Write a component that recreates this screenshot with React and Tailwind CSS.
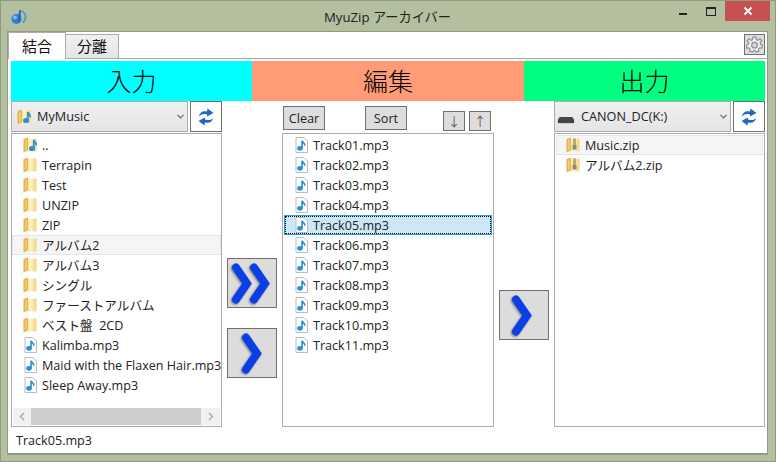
import React from "react";

const FONT = "font-['Open_Sans','Noto_Sans_CJK_JP',sans-serif]";

// ── Small drawn icons ─────────────────────────────────────────────────────────
const AppIcon = () => (
  <svg width="18" height="18" viewBox="0 0 18 18">
    <circle cx="6.5" cy="11" r="5" fill="#2f7fd0" />
    <circle cx="5" cy="9.5" r="2" fill="#7fbdec" />
    <path d="M10 3 C9.5 6 10 9 9 13" stroke="#1d68b8" strokeWidth="2" fill="none" strokeLinecap="round" />
    <path d="M11 3 C14 4 16 6 15.5 10 C15.4 12 14.5 13 13.5 14" stroke="#4a97d8" strokeWidth="1.8" fill="none" strokeLinecap="round" />
  </svg>
);

const FolderIcon = ({ overlay, id }) => (
  <svg width="14" height="16" viewBox="0 0 14 16" className="shrink-0">
    <defs>
      <linearGradient id={id} x1="0" x2="1" y1="0" y2="0">
        <stop offset="0" stopColor="#f3d98a" />
        <stop offset="0.5" stopColor="#fdf3c4" />
        <stop offset="1" stopColor="#f1d27c" />
      </linearGradient>
    </defs>
    <path d="M4 1.5 H12.5 Q13.5 1.5 13.5 2.5 V13.5 Q13.5 14.5 12.5 14.5 H2 Z" fill={`url(#${id})`} />
    <path d="M.5 2 L5 .5 V13 L.5 15.5 Z" fill="#e3b44f" />
    <path d="M2 3 L4 2.3 V12 L2 13.2 Z" fill="#efcb72" />
    {overlay === "music" && (
      <>
        <ellipse cx="9" cy="11.5" rx="3" ry="2.6" fill="#2d8fd5" />
        <path d="M10.8 11 V3 C11.5 5 13.5 6 13.5 8.5" stroke="#2d8fd5" strokeWidth="1.8" fill="none" />
      </>
    )}
    {overlay === "zip" && (
      <>
        <rect x="7" y="1.5" width="3" height="7" fill="#b9a878" />
        <rect x="6.5" y="8" width="4" height="4.5" fill="#8f8a76" />
      </>
    )}
  </svg>
);

const MusicIcon = () => (
  <svg width="13" height="16" viewBox="0 0 13 16" className="shrink-0">
    <path d="M1 .5 H9 L12.5 4 V15.5 H1 Z" fill="#fff" stroke="#b5bcc4" />
    <ellipse cx="5" cy="11.3" rx="2.8" ry="2.4" fill="#2d8fd5" />
    <path d="M7 11 V3.8 C7.6 5.5 10 6 9.8 8.8" stroke="#2d8fd5" strokeWidth="1.6" fill="none" />
  </svg>
);

const DriveIcon = () => (
  <svg width="18" height="16" viewBox="0 0 20 16" className="shrink-0">
    <path d="M3 8 H17 L19 11 V14 H1 V11 Z" fill="#45474a" />
    <rect x="1" y="13" width="18" height="1.5" fill="#2f3133" />
    <rect x="2" y="14.5" width="16" height="1" fill="#b9bcc0" />
  </svg>
);

const RefreshIcon = () => (
  <svg width="16" height="18" viewBox="0 0 16 18">
    <path d="M1 8.5 C1.5 4.5 5 2.5 9 3.5 L9.5 .5 L15.5 5 L9 8.5 L9 6.5 C6 5.5 3.5 6 1 8.5 Z" fill="#2268c0" />
    <path d="M15 10 C14.5 14 11 15.5 7 14.5 L6.5 17.5 L.5 13 L7 9.5 L7 11.5 C10 12.5 12.5 12.5 15 10 Z" fill="#2268c0" />
  </svg>
);

const GearIcon = () => (
  <svg width="17" height="17" viewBox="0 0 24 24" fill="#eceef0" stroke="#8a8d92" strokeWidth="1.6">
    <path d="M10 1.5 H14 L14.6 5 L17 6 L19.6 4 L22.4 7 L20 9.4 L20.8 12 L23.4 13 L22.4 17 L19.4 16.6 L17.6 18.6 L18 21.6 L14 22.8 L12.8 20.4 H10.6 L9.4 22.8 L5.4 21.6 L5.8 18.6 L4 16.6 L1 17 L.4 13 L3 12 L3.8 9.4 L1.6 7 L4.4 4 L7 6 L9.4 5 Z" />
    <circle cx="12" cy="13" r="4" fill="#d4d6d9" />
  </svg>
);

// one blue chevron stroke, tip at x + 11
const Chevron = ({ x }) => (
  <path
    d={`M${x} 8.5 L${x + 11} 24.5 L${x} 40.5`}
    fill="none"
    stroke="#0a3fe6"
    strokeWidth="8"
    strokeLinecap="round"
    strokeLinejoin="miter"
  />
);

// ── Controls ──────────────────────────────────────────────────────────────────
const ArrowButton = ({ double, x = 18 }) => (
  <button className="w-[50px] h-[50px] shrink-0 bg-[#dcdcdc] border border-[#707070] flex items-center justify-center">
    <svg width="48" height="48" viewBox="0 0 48 48" className="drop-shadow-[-1px_1px_1px_rgba(0,0,0,0.45)]">
      {double ? (
        <>
          <Chevron x={8} />
          <Chevron x={26} />
        </>
      ) : (
        <Chevron x={x} />
      )}
    </svg>
  </button>
);

const SmallButton = ({ children, className }) => (
  <button className={`bg-[#dddddd] border border-[#707070] text-[12.7px] leading-none flex items-center justify-center ${className}`}>
    {children}
  </button>
);

const Combo = ({ icon, label, pad }) => (
  <div className="flex h-[31px] gap-[2px]">
    <div className={`flex-1 flex items-center bg-gradient-to-b from-[#f0f0f0] to-[#e5e5e5] border border-[#acacac] pr-[3px] ${pad}`}>
      {icon}
      <span className="ml-[6px] text-[12.7px] text-[#222] flex-1 truncate">{label}</span>
      <svg width="7" height="5" viewBox="0 0 7 5">
        <path d="M.5 .8 L3.5 3.8 L6.5 .8" stroke="#666" strokeWidth="1.2" fill="none" />
      </svg>
    </div>
    <button className="w-[32px] bg-white border border-[#707070] flex items-center justify-center">
      <RefreshIcon />
    </button>
  </div>
);

const Row = ({ icon, label, state, pad = "pl-[9px]" }) => {
  const tone =
    state === "hover"
      ? "bg-[#f5f5f5] border-[#e5e5e5]"
      : state === "selected"
      ? "bg-[#cce8f7] border-[#26a0da]"
      : "border-transparent";
  return (
    <div className={`h-[20px] border flex items-center whitespace-pre text-[12.6px] leading-none text-[#222] ${tone} ${pad} ${state === "selected" ? "outline outline-1 outline-dotted outline-black -outline-offset-2" : ""}`}>
      <span className="w-[14px] flex justify-center shrink-0">{icon}</span>
      <span className="ml-[5px] pt-[2px]">{label}</span>
    </div>
  );
};

const leftRows = [
  ["music-folder", ".."],
  ["folder", "Terrapin"],
  ["folder", "Test"],
  ["folder", "UNZIP"],
  ["folder", "ZIP"],
  ["folder", "アルバム2", "hover"],
  ["folder", "アルバム3"],
  ["folder", "シングル"],
  ["folder", "ファーストアルバム"],
  ["folder", "ベスト盤  2CD"],
  ["music", "Kalimba.mp3"],
  ["music", "Maid with the Flaxen Hair.mp3"],
  ["music", "Sleep Away.mp3"],
];

const tracks = Array.from({ length: 11 }, (_, i) => `Track${String(i + 1).padStart(2, "0")}.mp3`);

const rowIcon = (kind, i) => {
  if (kind === "music") return <MusicIcon />;
  return <FolderIcon id={`folder-${i}`} overlay={kind === "music-folder" ? "music" : undefined} />;
};

// ── Page ─────────────────────────────────────────────────────────────────────
const App = () => (
  <div className={`w-[776px] h-[462px] overflow-hidden bg-[#b4bfa0] shadow-[inset_0_0_0_1px_#8f9a80] flex flex-col pl-[7px] pr-[8px] pb-[7px] ${FONT}`}>
    <header className="h-[31px] shrink-0 flex items-start">
      <div className="w-[23px] pt-[8px] pl-[3px]">
        <AppIcon />
      </div>
      <div className="flex-1 text-center text-[13.2px] leading-[34px] text-[#222] pl-[76px]">MyuZip アーカイバー</div>
      <div className="flex items-start -mr-[2px] pt-[1px]">
        <div className="w-[28px] h-[20px] flex items-center justify-center pt-[6px]">
          <div className="w-[8px] h-[2px] bg-[#222]" />
        </div>
        <div className="w-[28px] h-[20px] flex items-center justify-center">
          <div className="w-[10px] h-[9px] border border-[#222] border-t-2" />
        </div>
        <div className="w-[45px] h-[20px] bg-[#c75050] flex items-center justify-center">
          <svg width="10" height="10" viewBox="0 0 10 10">
            <path d="M1.5 1.5 L8.5 8.5 M8.5 1.5 L1.5 8.5" stroke="#fff" strokeWidth="2" />
          </svg>
        </div>
      </div>
    </header>

    <main className="flex-1 min-h-0 bg-white flex flex-col border border-b-2 border-[#8f9a80]">
      <div className="h-[27px] shrink-0 flex items-end border-b border-[#acacac] relative">
        <div className="w-[58px] h-[27px] bg-white border border-b-0 border-[#acacac] text-[15px] flex items-center justify-center text-[#111] -mb-px relative">結合</div>
        <div className="w-[53px] h-[24px] bg-gradient-to-b from-[#f0f0f0] to-[#e5e5e5] border border-l-0 border-b-0 border-[#acacac] text-[15px] flex items-center justify-center text-[#111]">分離</div>
        <button className="absolute right-[2px] top-[2px] w-[21px] h-[21px] bg-[#dddddd] border border-[#707070] flex items-center justify-center">
          <GearIcon />
        </button>
      </div>

      <div className="flex-1 min-h-0 flex flex-col pl-[3px] pr-[2px] pt-[2px]">
        <div className="h-[40px] shrink-0 flex text-[25px] font-light leading-none text-black">
          <div className="w-[241px] bg-[#00ffff] flex items-center justify-center">入力</div>
          <div className="w-[272px] bg-[#ff9b75] flex items-center justify-center">編集</div>
          <div className="w-[241px] bg-[#00ff80] flex items-center justify-center">出力</div>
        </div>

        <div className="flex h-[326px] shrink-0">
          <section className="w-[211px] flex flex-col">
            <Combo icon={<FolderIcon id="combo-folder" overlay="music" />} label="MyMusic" pad="pl-[5px]" />
            <div className="mt-[1px] flex-1 border border-[#acacac] flex flex-col overflow-hidden pt-[1px]">
              <div className="flex-1 overflow-hidden">
                {leftRows.map(([kind, label, state], i) => (
                  <Row key={label} icon={rowIcon(kind, i)} label={label} state={state} pad="pl-[10px]" />
                ))}
              </div>
              <div className="h-[17px] mx-[1px] mb-[1px] shrink-0 bg-[#f0f0f0] flex items-center justify-between">
                <span className="w-[17px] flex justify-center">
                  <svg width="6" height="9" viewBox="0 0 6 9"><path d="M5 1 L1.5 4.5 L5 8" stroke="#a6a6a6" strokeWidth="1.4" fill="none" /></svg>
                </span>
                <div className="w-[170px] h-full bg-[#cdcdcd]" />
                <span className="w-[19px] flex justify-center">
                  <svg width="6" height="9" viewBox="0 0 6 9"><path d="M1 1 L4.5 4.5 L1 8" stroke="#a6a6a6" strokeWidth="1.4" fill="none" /></svg>
                </span>
              </div>
            </div>
          </section>

          <div className="w-[60px] flex flex-col items-center pt-[157px] gap-[20px]">
            <ArrowButton double />
            <ArrowButton x={18} />
          </div>

          <section className="w-[212px] flex flex-col">
            <div className="h-[32px] shrink-0 flex items-start pt-[5px] pl-[1px]">
              <SmallButton className="w-[42px] h-[24px] text-[#222]">Clear</SmallButton>
              <SmallButton className="w-[42px] h-[24px] ml-[40px] text-[#222]">Sort</SmallButton>
              <SmallButton className="w-[22px] h-[20px] ml-[36px] mt-[5px] text-[#6e5555]">↓</SmallButton>
              <SmallButton className="w-[22px] h-[20px] ml-[4px] mt-[5px] text-[#6e5555]">↑</SmallButton>
            </div>
            <div className="flex-1 border border-[#acacac] pt-[1px] px-[1px]">
              {tracks.map((t) => (
                <Row key={t} icon={<MusicIcon />} label={t} state={t === "Track05.mp3" ? "selected" : undefined} />
              ))}
            </div>
          </section>

          <div className="w-[60px] flex flex-col items-center pt-[189px]">
            <ArrowButton x={16} />
          </div>

          <section className="w-[211px] flex flex-col">
            <Combo icon={<DriveIcon />} label="CANON_DC(K:)" pad="pl-[2px]" />
            <div className="mt-[1px] flex-1 border border-[#acacac] pt-[1px] px-[1px]">
              <Row icon={<FolderIcon id="zip-1" overlay="zip" />} label="Music.zip" state="hover" />
              <Row icon={<FolderIcon id="zip-2" overlay="zip" />} label="アルバム2.zip" />
            </div>
          </section>
        </div>

        <footer className="flex-1 flex items-center pl-[5px] pt-[2px] text-[12.6px] text-[#222] leading-none">Track05.mp3</footer>
      </div>
    </main>
  </div>
);

export default App;
